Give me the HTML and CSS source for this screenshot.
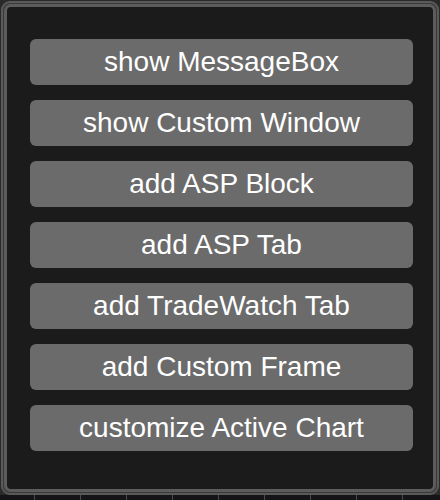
FILE: index.html
```html
<!DOCTYPE html>
<html>
<head>
<meta charset="utf-8">
<link rel="stylesheet" href="styles.css">
</head>
<body>
<div class="frame">
  <div class="panel">
    <button class="btn">show MessageBox</button>
    <button class="btn">show Custom Window</button>
    <button class="btn">add ASP Block</button>
    <button class="btn">add ASP Tab</button>
    <button class="btn">add TradeWatch Tab</button>
    <button class="btn">add Custom Frame</button>
    <button class="btn">customize Active Chart</button>
  </div>
</div>
<div class="axis"></div>
</body>
</html>
```
FILE: styles.css
```css
html, body {
  margin: 0;
  padding: 0;
}
body {
  width: 440px;
  height: 500px;
  background: #2a2a2a;
  overflow: hidden;
  font-family: "Liberation Sans", Arial, sans-serif;
}
.frame {
  margin: 1px 1px 0 1px;
  height: 494px;
  box-sizing: border-box;
  border: 2px solid #5a5a5a;
  border-radius: 9px;
  padding: 1px;
  background: #3a3a3a;
}
.panel {
  height: 100%;
  box-sizing: border-box;
  border: 3px solid #5c5c5c;
  border-radius: 7px;
  background: #1b1b1b;
  padding: 32px 20px 0 23px;
  display: flex;
  flex-direction: column;
  gap: 15px;
}
.btn {
  height: 46px;
  flex: none;
  border: none;
  border-radius: 6px;
  background: #6b6b6b;
  color: #ffffff;
  font-family: "Liberation Sans", Arial, sans-serif;
  font-size: 28px;
  padding: 0;
  margin: 0;
  text-align: center;
  line-height: 46px;
}
.axis {
  height: 5px;
  background-color: #141418;
  background-image: repeating-linear-gradient(to right, transparent 0 34px, #4a4a50 34px 35px, transparent 35px 46px);
}
```
